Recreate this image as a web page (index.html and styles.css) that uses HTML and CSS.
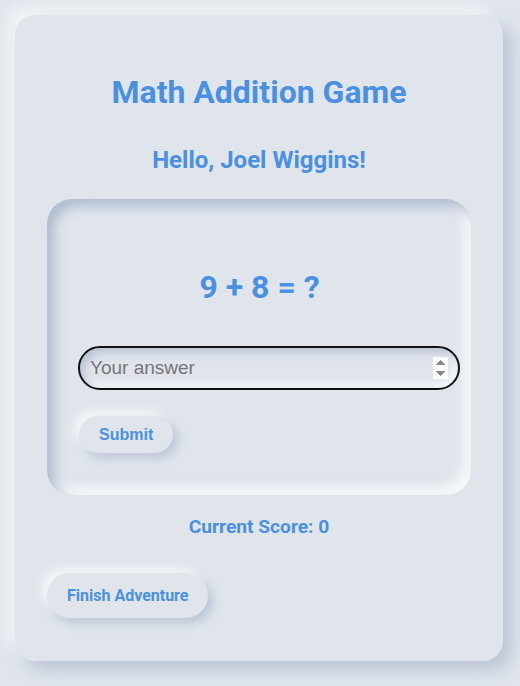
FILE: index.html
```html
<!DOCTYPE html>
<html>
<head>
<meta charset="utf-8">
<link rel="stylesheet" href="styles.css">
</head>
<body>
<div class="card">
  <h1 class="title">Math Addition Game</h1>
  <h2 class="greeting">Hello, Joel Wiggins!</h2>
  <div class="game">
    <div class="equation">9 + 8 = ?</div>
    <input class="answer" type="number" placeholder="Your answer" autofocus>
    <button class="btn btn-submit">Submit</button>
  </div>
  <div class="score">Current Score: 0</div>
  <button class="btn btn-finish">Finish Adventure</button>
</div>
</body>
</html>
```
FILE: styles.css
```css
html, body {
  margin: 0;
  background: #e0e5ec;
}
body {
  padding: 15px 17px 25px 15px;
  font-family: Roboto, "Liberation Sans", sans-serif;
}
.card {
  width: 488px;
  box-sizing: border-box;
  height: 646px;
  background: #e0e5ec;
  border-radius: 20px;
  padding: 59px 32px 0 32px;
  box-shadow: 9px 9px 16px rgba(163,177,198,0.6), -9px -9px 16px rgba(255,255,255,0.6);
}
.title {
  margin: 0;
  text-align: center;
  font-size: 32px;
  font-weight: 700;
  color: #4a90e2;
  line-height: 37.5px;
}
.greeting {
  margin: 34px 0 0 0;
  text-align: center;
  font-size: 24px;
  font-weight: 700;
  color: #4a90e2;
  line-height: 28px;
}
.game {
  margin-top: 25px;
  height: 296px;
  box-sizing: border-box;
  border-radius: 25px;
  padding: 0 30px 0 31px;
  display: flex;
  flex-direction: column;
  align-items: flex-start;
  box-shadow: inset 7px 7px 12px rgba(163,177,198,0.8), inset -7px -7px 12px rgba(255,255,255,0.8);
}
.equation {
  align-self: stretch;
  margin-top: 70px;
  text-align: center;
  font-size: 32px;
  font-weight: 700;
  color: #4a90e2;
  line-height: 37.5px;
}
.answer {
  margin-top: 40px;
  width: 382px;
  height: 44px;
  box-sizing: border-box;
  padding: 0 10px;
  border: 2px solid #111;
  border-radius: 22px;
  background: #e0e5ec;
  outline: none;
  font-family: "Liberation Sans", Arial, sans-serif;
  font-size: 19px;
  color: #333;
  box-shadow: inset 4px 4px 8px rgba(163,177,198,0.7), inset -4px -4px 8px rgba(255,255,255,0.8);
}
.answer::placeholder {
  color: #757575;
}
.btn {
  border: none;
  background: #e0e5ec;
  color: #4a90e2;
  font-weight: 700;
  border-radius: 999px;
  box-shadow: 5px 5px 10px rgba(163,177,198,0.6), -5px -5px 10px rgba(255,255,255,0.7);
}
.btn-submit {
  margin-top: 26px;
  margin-left: 1px;
  height: 37px;
  padding: 0 20px;
  font-family: "Liberation Sans", Arial, sans-serif;
  font-size: 16px;
}
.score {
  margin-top: 21px;
  text-align: center;
  font-size: 19.2px;
  font-weight: 700;
  color: #4a90e2;
  line-height: 22.5px;
}
.btn-finish {
  margin-top: 35px;
  height: 45px;
  padding: 0 20px;
  font-family: Roboto, sans-serif;
  font-size: 16px;
}
```
